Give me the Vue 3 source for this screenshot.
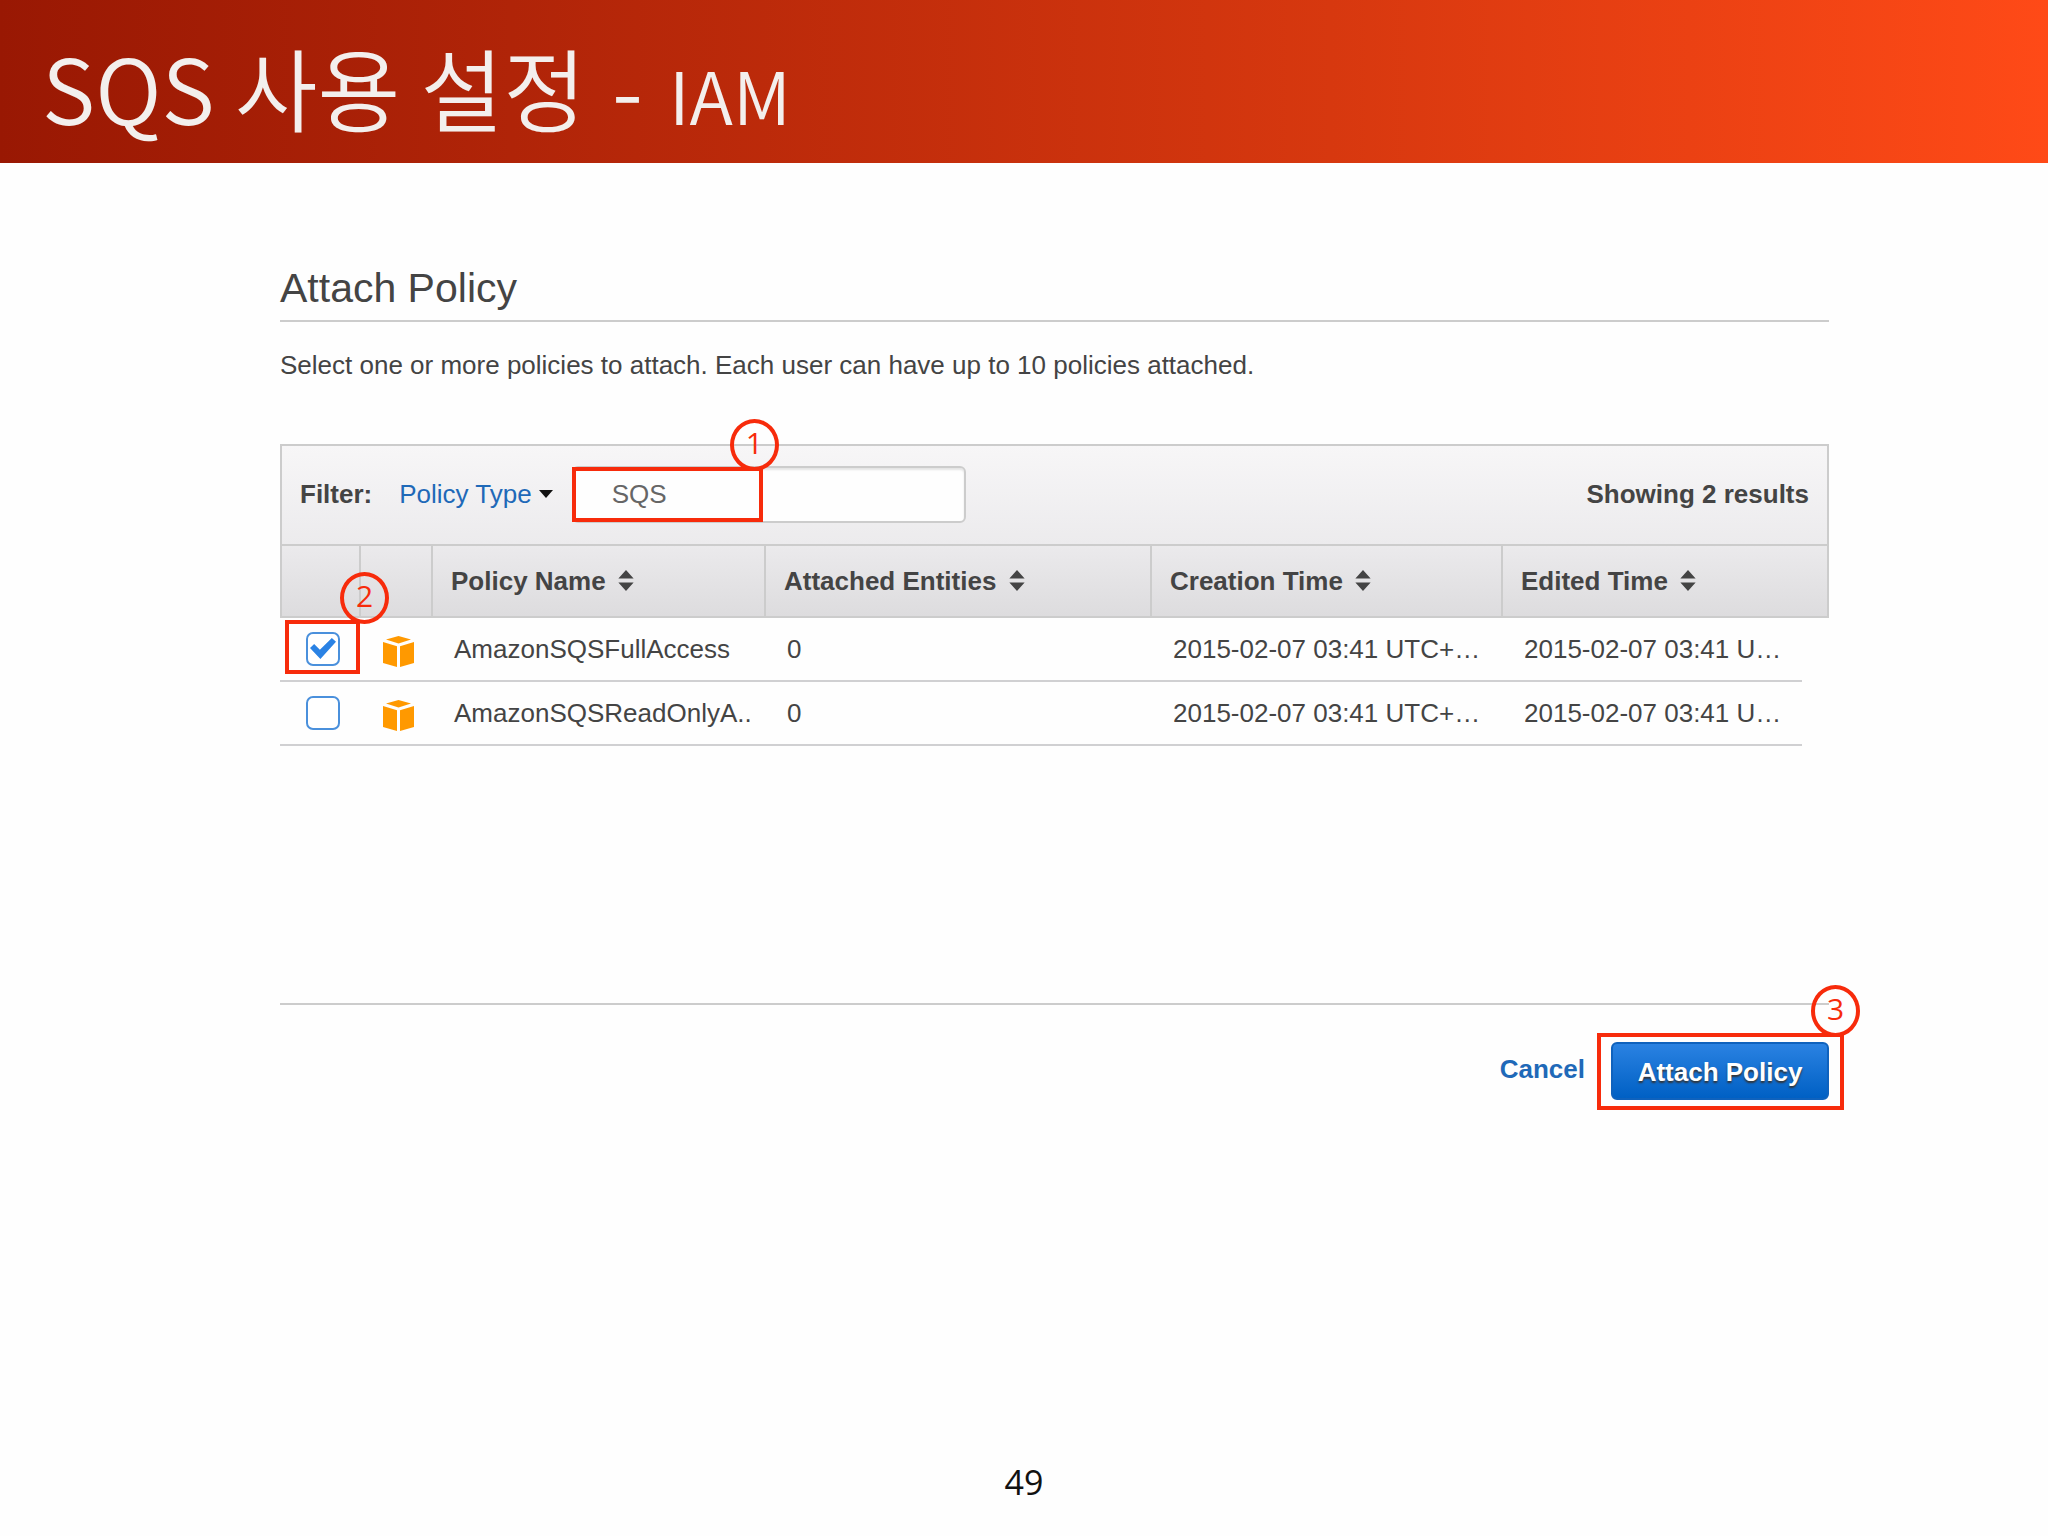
<template>
	<div class="slide">
		<header class="slide-header">
			<h1>
				<span>SQS 사용 설정</span>
				<span>-</span>
				<small>IAM</small>
			</h1>
		</header>

		<main class="content">
			<h2>Attach Policy</h2>
			<p class="intro">Select one or more policies to attach. Each user can have up to 10 policies attached.</p>

			<section class="policies">
				<div class="filter-bar">
					<label class="filter-label" for="policy-search">Filter:</label>
					<button class="type-button" type="button">
						Policy Type
						<svg class="caret" viewBox="0 0 14 8"><path d="M0 0h14L7 8z" /></svg>
					</button>
					<div class="search">
						<input id="policy-search" v-model="keyword" type="text" />
						<div class="mark mark-search"><span class="mark-number">1</span></div>
					</div>
					<strong class="results">Showing {{ policies.length }} results</strong>
				</div>

				<table>
					<colgroup>
						<col class="col-check" />
						<col class="col-icon" />
						<col class="col-name" />
						<col class="col-entities" />
						<col class="col-created" />
						<col />
						<col class="col-gutter" />
					</colgroup>
					<thead>
						<tr>
							<th></th>
							<th></th>
							<th v-for="(column, index) in columns" :key="column" :colspan="index === columns.length - 1 ? 2 : 1">
								{{ column }}
								<svg class="sort" viewBox="0 0 16 22"><path d="M8 0l8 9H0zM0 13h16l-8 9z" /></svg>
							</th>
						</tr>
					</thead>
					<tbody>
						<tr v-for="(policy, index) in policies" :key="policy.name">
							<td class="check-cell">
								<input v-model="policy.checked" type="checkbox" :aria-label="policy.name" />
								<div v-if="index === 0" class="mark mark-check"><span class="mark-number">2</span></div>
							</td>
							<td class="icon-cell">
								<svg class="cube" viewBox="0 0 31 31">
									<path d="M15.500 0L28 3.500 15.500 7.400 3 3.500z" />
									<path d="M0 6l14 4.200V31L0 27z" />
									<path d="M31 6l-14 4.200V31l14-4z" />
								</svg>
							</td>
							<td>{{ policy.name }}</td>
							<td>{{ policy.entities }}</td>
							<td>{{ policy.created }}</td>
							<td>{{ policy.edited }}</td>
						</tr>
					</tbody>
				</table>
			</section>

			<div class="actions">
				<a class="cancel" href="#">Cancel</a>
				<div class="attach">
					<button class="attach-button" type="button">Attach Policy</button>
					<div class="mark mark-attach"><span class="mark-number">3</span></div>
				</div>
			</div>
		</main>

		<footer class="page-number">49</footer>
	</div>
</template>

<script setup>
import { ref } from 'vue';

const keyword = ref('SQS');
const columns = ['Policy Name', 'Attached Entities', 'Creation Time', 'Edited Time'];
const policies = ref([
	{
		name: 'AmazonSQSFullAccess',
		entities: 0,
		created: '2015-02-07 03:41 UTC+…',
		edited: '2015-02-07 03:41 U…',
		checked: true
	},
	{
		name: 'AmazonSQSReadOnlyA..',
		entities: 0,
		created: '2015-02-07 03:41 UTC+…',
		edited: '2015-02-07 03:41 U…',
		checked: false
	}
]);
</script>

<style>
body {
	margin: 0;
	background: #fefefe;
}
</style>

<style scoped>
.slide {
	min-height: 100vh;
	display: flex;
	flex-direction: column;
	box-sizing: border-box;
	font-family: "Liberation Sans", Arial, sans-serif;
	font-size: 26px;
	line-height: 32px;
	color: #444;
}

.slide-header {
	height: 163px;
	padding: 16px 42px 0;
	display: flex;
	align-items: center;
	box-sizing: border-box;
	background: linear-gradient(to right, #991803, #b02408 25%, #d7380f 65%, #ff4a17);
}

h1 {
	margin: 0;
	display: flex;
	align-items: baseline;
	gap: 26px;
	font-family: "Noto Sans CJK KR", sans-serif;
	font-size: 90px;
	line-height: 120px;
	font-weight: 350;
	color: #f3efed;
}

h1 small {
	font-size: 72px;
}

.content {
	flex: 1;
	padding: 100px 219px 0 280px;
}

h2 {
	margin: 0;
	padding-bottom: 7px;
	border-bottom: 2px solid #ccc;
	font-size: 41px;
	line-height: 50px;
	font-weight: normal;
}

.intro {
	margin: 27px 0 63px;
}

.filter-bar {
	height: 96px;
	padding: 0 18px 2px;
	display: flex;
	align-items: center;
	border: 2px solid #ccc;
	border-bottom: none;
	background: linear-gradient(#f7f6f7, #ecebed);
}

.filter-label,
.results {
	font-weight: bold;
}

.type-button {
	margin: 0 19px 0 27px;
	padding: 0;
	display: flex;
	align-items: center;
	gap: 7px;
	border: none;
	background: none;
	font: inherit;
	color: #1f69b8;
}

.caret {
	width: 14px;
	height: 8px;
	fill: #111;
}

.search {
	position: relative;
	width: 394px;
}

.search input {
	display: block;
	width: 100%;
	height: 57px;
	padding: 0 38px;
	box-sizing: border-box;
	border: 2px solid #ccc;
	border-radius: 6px;
	background: #fefefe;
	box-shadow: inset 0 2px 2px #e4e4e4;
	font: inherit;
	color: #666;
	outline: none;
}

.results {
	margin-left: auto;
}

table {
	width: 100%;
	table-layout: fixed;
	border-collapse: separate;
	border-spacing: 0;
}

.col-check {
	width: 81px;
}

.col-icon {
	width: 72px;
}

.col-name {
	width: 333px;
}

.col-entities {
	width: 386px;
}

.col-created {
	width: 351px;
}

.col-gutter {
	width: 27px;
}

th {
	height: 70px;
	padding: 0 0 0 18px;
	border: 2px solid #ccc;
	border-left: none;
	background: linear-gradient(#ebeaec, #dddcde);
	text-align: left;
	white-space: nowrap;
}

th:first-child {
	border-left: 2px solid #ccc;
}

.sort {
	width: 16px;
	height: 21px;
	margin-left: 5px;
	vertical-align: -1px;
	fill: #444;
}

td {
	height: 62px;
	padding: 0 0 0 21px;
	border-bottom: 2px solid #d0d0d2;
	white-space: nowrap;
}

.check-cell {
	position: relative;
	padding-left: 26px;
}

.check-cell input {
	appearance: none;
	display: block;
	width: 34px;
	height: 34px;
	margin: 0;
	border: 2px solid #4a90dc;
	border-radius: 7px;
	background: #fff;
}

.check-cell input:checked::before {
	content: "";
	display: block;
	width: 26px;
	height: 21px;
	margin: 4px 2px;
	background: #2a82e4;
	clip-path: polygon(0 48%, 16% 28%, 38% 56%, 84% 0, 100% 18%, 40% 100%);
}

.icon-cell {
	padding-left: 22px;
}

.cube {
	display: block;
	width: 31px;
	height: 31px;
	margin-top: 4px;
	fill: #ff9900;
}

.actions {
	margin-top: 257px;
	padding-top: 37px;
	display: flex;
	justify-content: flex-end;
	align-items: center;
	gap: 26px;
	border-top: 2px solid #ccc;
}

.cancel {
	padding-bottom: 4px;
	font-weight: bold;
	color: #1f69b8;
	text-decoration: none;
}

.attach {
	position: relative;
}

.attach-button {
	display: block;
	width: 218px;
	height: 58px;
	padding: 2px 0 0;
	border: 2px solid #0f62bd;
	border-radius: 6px;
	background: linear-gradient(#2a82e2, #0060c4);
	font: inherit;
	font-weight: bold;
	color: #fff;
	text-shadow: 0 2px 2px #333;
}

/* Red call-out frames with a numbered circle on the corner */
.mark {
	position: absolute;
	box-sizing: border-box;
	border: 4px solid #f72b0b;
	pointer-events: none;
}

.mark-search {
	top: 1px;
	left: 0;
	width: 191px;
	height: 55px;
}

.mark-check {
	top: 2px;
	left: 5px;
	width: 75px;
	height: 54px;
}

.mark-attach {
	inset: -9px -15px -10px -14px;
}

.mark-number {
	position: absolute;
	bottom: 100%;
	right: -20px;
	width: 41px;
	height: 44px;
	border: 4px solid #f72b0b;
	border-radius: 50%;
	font-family: "Open Sans", sans-serif;
	font-size: 30px;
	line-height: 40px;
	text-align: center;
	color: #f72b0b;
}

.mark-check .mark-number {
	right: -33px;
}

.page-number {
	padding-bottom: 31px;
	font-family: "Open Sans", sans-serif;
	font-size: 34px;
	line-height: 46px;
	text-align: center;
	color: #111;
}
</style>
